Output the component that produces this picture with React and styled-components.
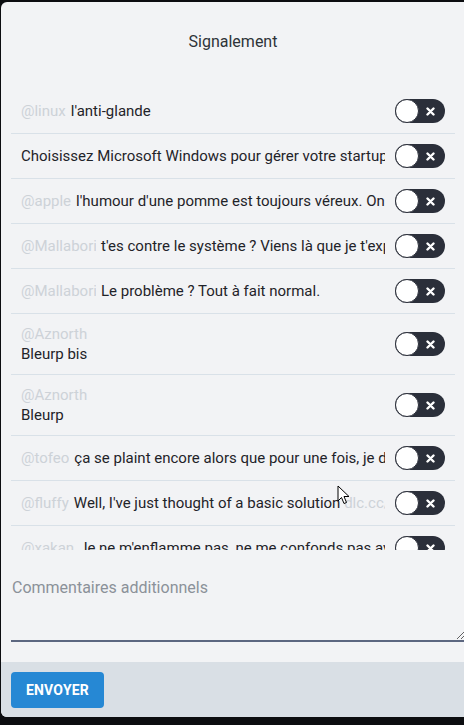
import React from "react";
import styled, { createGlobalStyle } from "styled-components";

const GlobalStyle = createGlobalStyle`
  html, body {
    margin: 0;
    padding: 0;
    background: #0c0d10;
    overflow: hidden;
    font-family: Roboto, "Liberation Sans", sans-serif;
  }
`

const Modal = styled.div`
  position: relative;
  width: 474px;
  margin: 2px 0 0 1px;
  background: #f2f3f5;
  border-radius: 6px;
  overflow: hidden;
`
const Body = styled.div`
  padding: 0 10px 20px 10px;
`
const Title = styled.div`
  width: 444px;
  padding: 30px 0 37px 0;
  text-align: center;
  font-size: 16px;
  line-height: 20px;
  color: #2e3338;
`
const List = styled.div`
  height: 461px;
  overflow: hidden;
  padding-right: 10px;
`
const Row = styled.div`
  display: flex;
  align-items: center;
  gap: 10px;
  padding: 10px;
  border-bottom: 1px solid #d9e1e8;
`
const Message = styled.div`
  flex: 1;
  min-width: 0;
  font-size: 15px;
  line-height: 20px;
  color: #1f2329;
  white-space: nowrap;
  overflow: hidden;
`
const Author = styled.span`
  display: ${p => (p.$block ? "block" : "inline-block")};
  max-width: 75px;
  overflow: hidden;
  vertical-align: top;
  color: #cdd2d8;
  margin-right: ${p => (p.$block ? "0" : "5px")};
`
const Faded = styled.span`
  color: #cdd2d8;
`
const Toggle = styled.div`
  flex: none;
  position: relative;
  width: 50px;
  height: 24px;
  border-radius: 12px;
  background: #2b2f3a;
  display: flex;
  align-items: center;
  justify-content: flex-end;
  padding-right: 10px;
  box-sizing: border-box;
`
const Knob = styled.div`
  position: absolute;
  left: 0;
  top: 0;
  width: 22px;
  height: 22px;
  border-radius: 50%;
  background: #fff;
  border: 1px solid #2b2f3a;
`
const Comment = styled.textarea`
  display: block;
  box-sizing: border-box;
  width: 100%;
  height: 76px;
  margin-top: 16px;
  padding: 12px 0 0 1px;
  border: none;
  border-bottom: 2px solid #5c6780;
  background: transparent;
  font-family: Roboto, "Liberation Sans", sans-serif;
  font-size: 16px;
  line-height: 20px;
  color: #1f2329;
  outline: none;
  &::placeholder {
    color: #8b9199;
  }
`
const Footer = styled.div`
  background: #d9dfe5;
  padding: 10px;
  height: 55px;
  box-sizing: border-box;
`
const SendButton = styled.button`
  width: 93px;
  height: 36px;
  border: none;
  border-radius: 4px;
  background: #2688d4;
  color: #fff;
  font-family: Roboto, "Liberation Sans", sans-serif;
  font-weight: 700;
  font-size: 14px;
  text-transform: uppercase;
  letter-spacing: 0.2px;
`
const Cursor = styled.svg`
  position: absolute;
  left: 336px;
  top: 483px;
  pointer-events: none;
`

const reports = [
    { author: "@linux", text: "l'anti-glande" },
    { author: null, text: "Choisissez Microsoft Windows pour gérer votre startup et faire des économies" },
    { author: "@apple", text: "l'humour d'une pomme est toujours véreux. On en reparle" },
    { author: "@Mallaborius", text: "t'es contre le système ? Viens là que je t'explique" },
    { author: "@Mallaborius", text: "Le problème ? Tout à fait normal." },
    { author: "@Aznorth", text: "Bleurp bis", block: true },
    { author: "@Aznorth", text: "Bleurp", block: true },
    { author: "@tofeo", text: "ça se plaint encore alors que pour une fois, je dis rien" },
    { author: "@fluffy", text: "Well, I've just thought of a basic solution", link: " dlc.cc/solution" },
    { author: "@xakan", text: "Je ne m'enflamme pas, ne me confonds pas avec un autre" },
];

function Cross(){
    return (
        <svg width="9" height="9" viewBox="0 0 9 9">
            <path d="M1.5 1.5 L7.5 7.5 M7.5 1.5 L1.5 7.5" stroke="#fff" strokeWidth="2.4" strokeLinecap="round"/>
        </svg>
    )
}

function App(){
    return(<>
            <GlobalStyle/>
            <Modal>
                <Body>
                    <Title>Signalement</Title>
                    <List>
                        {reports.map((r, i) => (
                            <Row key={i}>
                                <Message>
                                    {r.author && <Author $block={r.block}>{r.author}</Author>}
                                    {r.text}
                                    {r.link && <Faded>{r.link}</Faded>}
                                </Message>
                                <Toggle>
                                    <Knob/>
                                    <Cross/>
                                </Toggle>
                            </Row>
                        ))}
                    </List>
                    <Comment placeholder="Commentaires additionnels"/>
                </Body>
                <Footer>
                    <SendButton>Envoyer</SendButton>
                </Footer>
                <Cursor width="13" height="20" viewBox="0 0 13 20">
                    <path d="M1 1 L1 16 L4.5 12.5 L7 18.5 L9.5 17.5 L7 11.5 L12 11.5 Z" fill="#fff" stroke="#000" strokeWidth="1"/>
                </Cursor>
            </Modal>
        </>
    )
}

export default App;
